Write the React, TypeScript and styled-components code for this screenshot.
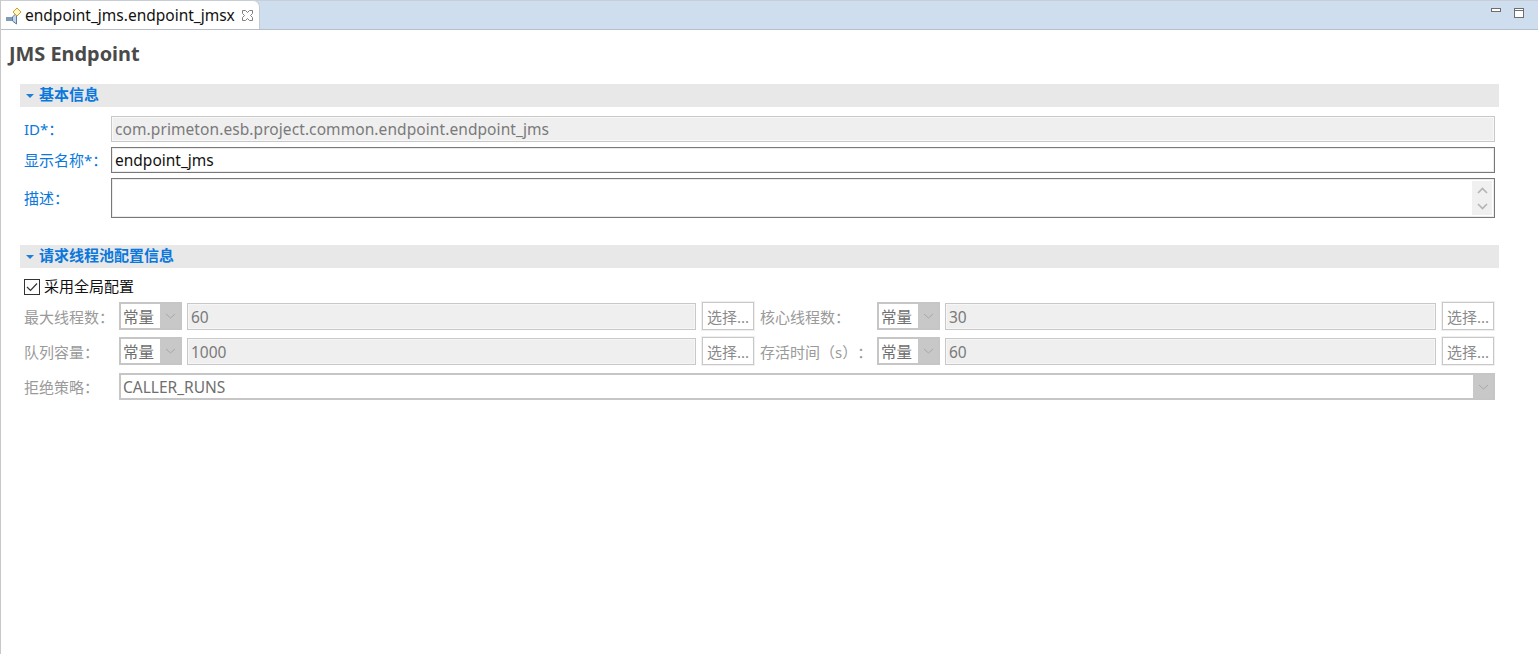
import React from 'react';
import styled, { createGlobalStyle } from 'styled-components';

const GlobalStyle = createGlobalStyle`
  html, body {
    margin: 0;
    padding: 0;
    height: 100%;
    background: #ffffff;
  }
  body {
    font-family: "Noto Sans", "Noto Sans CJK SC", sans-serif;
    font-size: 15px;
    text-spacing-trim: space-all;
    overflow: hidden;
  }
`;

const Frame = styled.div`
  width: 1538px;
  height: 654px;
  box-sizing: border-box;
  border-left: 1px solid #c8c8c8;
  display: flex;
  flex-direction: column;
`;

const TabStrip = styled.div`
  height: 30px;
  box-sizing: border-box;
  display: flex;
  justify-content: space-between;
  background: #cfdeee;
  border-top: 1px solid #c8ced6;
  border-bottom: 1px solid #b6bdcb;
`;

const Tab = styled.div`
  width: 259px;
  height: 29px;
  margin-top: -1px;
  box-sizing: border-box;
  display: flex;
  align-items: center;
  padding: 0 0 0 4px;
  background: #ffffff;
  border-top-right-radius: 7px;
  border-right: 1px solid #c4cad4;
  border-top: 1px solid #c8ced6;
  position: relative;
  z-index: 1;
`;

const TabTitle = styled.span`
  margin-left: 3px;
  color: #111111;
  font-size: 15.5px;
  white-space: nowrap;
`;

const TabClose = styled.span`
  margin-left: 7px;
  flex: none;
  display: flex;
`;

const ViewButtons = styled.div`
  display: flex;
  align-items: flex-start;
  gap: 13px;
  padding: 7px 14px 0 0;
`;

const Content = styled.div`
  flex: 1;
  padding: 11px 38px 0 8px;
  display: flex;
  flex-direction: column;
`;

const PageTitle = styled.h1`
  margin: 0;
  height: 43px;
  color: #4a4a4a;
  font-size: 19.9px;
  font-weight: 700;
  line-height: 26px;
`;

const Section = styled.section<{ $gap: number }>`
  margin: 0 0 0 11px;
  width: 1479px;
  margin-bottom: ${(p) => p.$gap}px;
`;

const SectionHeader = styled.div`
  height: 23px;
  box-sizing: border-box;
  display: flex;
  align-items: center;
  gap: 5px;
  padding: 0 0 5px 6px;
  background: #e8e8e8;
  color: #0a78dc;
  font-size: 15px;
  font-weight: 700;
`;

const Caret = styled.span`
  width: 0;
  height: 0;
  border-left: 4px solid transparent;
  border-right: 4px solid transparent;
  border-top: 4px solid #1f7fd6;
  margin-top: 6px;
`;

const BasicForm = styled.div`
  margin-top: 9px;
  display: grid;
  grid-template-columns: 87px 1384px;
  grid-template-rows: 26px 26px 40px;
  row-gap: 5px;
  padding-left: 4px;
`;

const BlueLabel = styled.label`
  color: #0a78dc;
  font-size: 15px;
  align-self: center;
  white-space: nowrap;
  margin-bottom: 2px;
`;

const TextField = styled.div`
  box-sizing: border-box;
  height: 100%;
  display: flex;
  align-items: center;
  padding-left: 3px;
  font-size: 15.5px;
  white-space: nowrap;
  overflow: hidden;
  color: #111111;
  border: 1px solid #787878;
  box-shadow: inset 0 0 0 1px #ececec;
  background: #ffffff;
`;

const IdField = styled(TextField)`
  color: #7a7a7a;
  letter-spacing: 0.08px;
  border-color: #c8c8c8;
  box-shadow: inset 0 0 0 1px #f8f8f8;
  background: #efefef;
`;

const DescField = styled(TextField)`
  justify-content: flex-end;
  align-items: stretch;
  padding: 2px;
`;

const ScrollBar = styled.div`
  width: 20px;
  background: #f0f0f0;
  display: flex;
  flex-direction: column;
  align-items: center;
  justify-content: space-between;
  padding: 6px 0 5px;
`;

const CheckRow = styled.label`
  margin: 11px 0 0 4px;
  height: 16px;
  display: flex;
  align-items: center;
  gap: 4px;
  color: #111111;
  font-size: 15px;
  line-height: 14px;
`;

const CheckText = styled.span`
  margin-bottom: 2px;
`;

const CheckBox = styled.span`
  width: 16px;
  height: 16px;
  box-sizing: border-box;
  border: 1px solid #333333;
  background: #ffffff;
  display: flex;
  align-items: center;
  justify-content: center;
`;

const PoolForm = styled.div`
  margin: 7px 0 0 4px;
  display: flex;
  flex-direction: column;
  gap: 7px;
`;

const PoolRow = styled.div`
  display: grid;
  grid-template-columns: 95px 63px 520px 52px 123px 63px 502px 52px;
  height: 28px;
  align-items: stretch;
`;

const PolicyRow = styled.div`
  display: grid;
  grid-template-columns: 95px 1376px;
  height: 27px;
  margin-top: 1px;
`;

const GreyLabel = styled.label<{ $inset?: number }>`
  color: #9a9a9a;
  font-size: 15px;
  align-self: center;
  white-space: nowrap;
  margin-left: ${(p) => p.$inset ?? 0}px;
`;

const Combo = styled.div`
  box-sizing: border-box;
  border: 2px solid #c6c6c6;
  display: flex;
  align-items: stretch;
  background: #ffffff;
`;

const ComboValue = styled.span`
  flex: 1;
  display: flex;
  align-items: center;
  padding-left: 2px;
  font-size: 15.5px;
  color: #6f6f6f;
  white-space: nowrap;
`;

const ComboArrow = styled.span`
  width: 20px;
  background: #c8c8c8;
  display: flex;
  align-items: center;
  justify-content: center;
`;

const ValueField = styled.div`
  box-sizing: border-box;
  margin: 1px 6px 0 5px;
  border: 1px solid #c8c8c8;
  box-shadow: inset 0 0 0 1px #f6f6f6;
  background: #efefef;
  display: flex;
  align-items: center;
  padding-left: 3px;
  color: #7a7a7a;
  font-size: 15.5px;
`;

const PickButton = styled.button`
  box-sizing: border-box;
  margin: 0;
  padding: 0;
  border: 1px solid #c8c8c8;
  background: #ffffff;
  box-shadow: 0 0 0 1px #f0f0f0;
  color: #8a8a8a;
  font-family: inherit;
  font-size: 15px;
  white-space: nowrap;
`;

const Chevron = ({ up }: { up?: boolean }) => (
  <svg width="11" height="7" viewBox="0 0 11 7">
    <path
      d={up ? 'M1 6 L5.5 1.5 L10 6' : 'M1 1 L5.5 5.5 L10 1'}
      fill="none"
      stroke="#b4b4b4"
      strokeWidth="1.6"
    />
  </svg>
);

const ThinChevron = () => (
  <svg width="11" height="6" viewBox="0 0 11 6">
    <path d="M1 1 L5.5 5 L10 1" fill="none" stroke="#a8a8a8" strokeWidth="1" />
  </svg>
);

const EndpointIcon = () => (
  <svg width="17" height="20" viewBox="0 0 17 20">
    <rect x="1" y="12" width="6" height="4" fill="#7f9db9" />
    <path d="M7.5 12 L11.5 8 V19 L7.5 16 Z" fill="#c3d4e6" stroke="#5d7f9f" strokeWidth="1" />
    <path d="M12 3 L16 7 L12 11 L8 7 Z" fill="#fff6cc" stroke="#d2a21e" strokeWidth="1" />
  </svg>
);

const CloseIcon = () => (
  <svg width="11" height="11" viewBox="0 0 11 11">
    <path
      d="M0.5 0.5 H3.5 L5.5 2.5 L7.5 0.5 H10.5 V3.5 L8.5 5.5 L10.5 7.5 V10.5 H7.5 L5.5 8.5 L3.5 10.5 H0.5 V7.5 L2.5 5.5 L0.5 3.5 Z"
      fill="#ffffff"
      stroke="#808080"
      strokeWidth="1"
    />
  </svg>
);

const MinimizeIcon = () => (
  <svg width="10" height="5" viewBox="0 0 10 5">
    <rect x="0.5" y="0.5" width="9" height="3" fill="#ffffff" stroke="#6e6e6e" />
  </svg>
);

const MaximizeIcon = () => (
  <svg width="10" height="10" viewBox="0 0 10 10">
    <rect x="0.5" y="0.5" width="9" height="9" fill="#ffffff" stroke="#6e6e6e" />
    <line x1="0" y1="2.5" x2="10" y2="2.5" stroke="#6e6e6e" />
  </svg>
);

const ConstCombo = () => (
  <Combo>
    <ComboValue>常量</ComboValue>
    <ComboArrow>
      <ThinChevron />
    </ComboArrow>
  </Combo>
);

export default function App() {
  return (
    <>
      <GlobalStyle />
      <Frame>
        <TabStrip>
          <Tab>
            <EndpointIcon />
            <TabTitle>endpoint_jms.endpoint_jmsx</TabTitle>
            <TabClose>
              <CloseIcon />
            </TabClose>
          </Tab>
          <ViewButtons>
            <MinimizeIcon />
            <MaximizeIcon />
          </ViewButtons>
        </TabStrip>
        <Content>
          <PageTitle>JMS Endpoint</PageTitle>
          <Section $gap={27}>
            <SectionHeader>
              <Caret />
              基本信息
            </SectionHeader>
            <BasicForm>
              <BlueLabel>ID*：</BlueLabel>
              <IdField>com.primeton.esb.project.common.endpoint.endpoint_jms</IdField>
              <BlueLabel>显示名称*：</BlueLabel>
              <TextField>endpoint_jms</TextField>
              <BlueLabel>描述：</BlueLabel>
              <DescField>
                <ScrollBar>
                  <Chevron up />
                  <Chevron />
                </ScrollBar>
              </DescField>
            </BasicForm>
          </Section>
          <Section $gap={0}>
            <SectionHeader>
              <Caret />
              请求线程池配置信息
            </SectionHeader>
            <CheckRow>
              <CheckBox>
                <svg width="12" height="10" viewBox="0 0 12 10">
                  <path d="M1 5 L4.5 8.5 L11 1.5" fill="none" stroke="#333333" strokeWidth="1.2" />
                </svg>
              </CheckBox>
              <CheckText>采用全局配置</CheckText>
            </CheckRow>
            <PoolForm>
              <PoolRow>
                <GreyLabel>最大线程数：</GreyLabel>
                <ConstCombo />
                <ValueField>60</ValueField>
                <PickButton>选择...</PickButton>
                <GreyLabel $inset={6}>核心线程数：</GreyLabel>
                <ConstCombo />
                <ValueField>30</ValueField>
                <PickButton>选择...</PickButton>
              </PoolRow>
              <PoolRow>
                <GreyLabel>队列容量：</GreyLabel>
                <ConstCombo />
                <ValueField>1000</ValueField>
                <PickButton>选择...</PickButton>
                <GreyLabel $inset={6}>存活时间（s）：</GreyLabel>
                <ConstCombo />
                <ValueField>60</ValueField>
                <PickButton>选择...</PickButton>
              </PoolRow>
              <PolicyRow>
                <GreyLabel>拒绝策略：</GreyLabel>
                <Combo>
                  <ComboValue>CALLER_RUNS</ComboValue>
                  <ComboArrow>
                    <ThinChevron />
                  </ComboArrow>
                </Combo>
              </PolicyRow>
            </PoolForm>
          </Section>
        </Content>
      </Frame>
    </>
  );
}
